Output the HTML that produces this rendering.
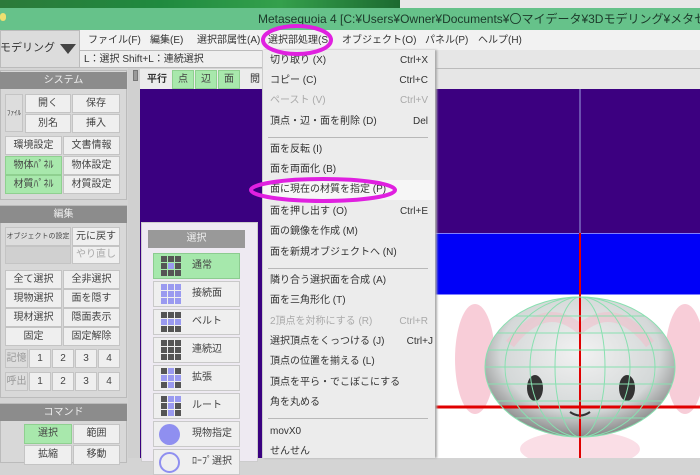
<!DOCTYPE html>
<html><head><meta charset="utf-8">
<style>
*{margin:0;padding:0;box-sizing:border-box}
body{width:700px;height:458px;overflow:hidden;position:relative;background:#d4d4d4;font-family:"Liberation Sans","Noto Sans CJK JP",sans-serif;font-size:10px;line-height:12px;color:#333}
.a{position:absolute}
.btn{position:absolute;background:#efefef;border:1px solid #c4c4c4;text-align:center;color:#444;font-size:10px}
.g{background:#a8e8ac;border-color:#8fd090}
.hd{position:absolute;background:#8c8c8c;color:#eee;text-align:center;font-size:10px}
.mi{position:absolute;left:270px;font-size:10px;line-height:12px;color:#333;white-space:nowrap}
.sc{position:absolute;right:272px;font-size:10px;line-height:12px;color:#333}
.dis{color:#aaa}
.sep{position:absolute;left:268px;width:160px;height:1px;background:#b8b8b8}
.si{position:absolute;left:153px;width:87px;height:26px;background:#efefef;border:1px solid #c9c9c9}
.si span{position:absolute;left:38px;top:6px;font-size:10px;line-height:12px;color:#444;white-space:nowrap}
.ic{position:absolute;left:7px;top:2px;width:20px;height:20px;display:grid;grid-template-columns:repeat(3,6px);gap:1px}
.D{background:#555}.B{background:#9a9af0}.L{background:#c4c4f4}
</style></head><body>
<div class="a" style="left:0;top:0;width:400px;height:8px;background:linear-gradient(90deg,#2c7a3a,#1f8a3f 40%,#34a04c 70%,#1c6a30)"></div>
<div class="a" style="left:400px;top:0;width:300px;height:8px;background:#e8e8e8"></div>
<div class="a" style="left:0;top:8px;width:700px;height:22px;background:#66c28a;overflow:hidden">
<div class="a" style="left:258px;top:4px;font-size:12px;line-height:14px;color:#1c3a2a;white-space:nowrap">Metasequoia 4 [C:¥Users¥Owner¥Documents¥〇マイデータ¥3Dモデリング¥メタセコ¥261マイ</div>
<div class="a" style="left:0;top:5px;width:6px;height:8px;border-radius:4px;background:#f0e070"></div>
</div>
<div class="a" style="left:80px;top:30px;width:620px;height:20px;background:#f2f2f2"></div>
<div class="a" style="left:0;top:30px;width:80px;height:38px;background:#dcdcdc;border:1px solid #bbb"></div>
<div class="a" style="left:0;top:42px;font-size:11px;line-height:13px;color:#333">モデリング</div>
<div class="a" style="left:60px;top:44px;width:0;height:0;border-left:8px solid transparent;border-right:8px solid transparent;border-top:10px solid #444"></div>
<div class="a" style="top:35px;left:88px;white-space:nowrap">ファイル(F)</div>
<div class="a" style="top:35px;left:150px">編集(E)</div>
<div class="a" style="top:35px;left:197px;white-space:nowrap">選択部属性(A)</div>
<div class="a" style="top:35px;left:268px;white-space:nowrap">選択部処理(S)</div>
<div class="a" style="top:35px;left:342px;white-space:nowrap">オブジェクト(O)</div>
<div class="a" style="top:35px;left:425px;white-space:nowrap">パネル(P)</div>
<div class="a" style="top:35px;left:478px;white-space:nowrap">ヘルプ(H)</div>
<div class="a" style="left:80px;top:50px;width:620px;height:18px;background:#efefef;border-top:1px solid #bbb;border-bottom:1px solid #bbb"></div>
<div class="a" style="left:84px;top:54px;white-space:nowrap">L：選択 Shift+L：連続選択</div>

<div class="a" style="left:0;top:70px;width:127px;height:130px;background:#d8d8d8;border:1px solid #bbb"></div>
<div class="hd" style="left:0;top:72px;width:127px;height:17px;line-height:17px">システム</div>
<div class="btn" style="left:5px;top:94px;width:18px;height:38px;background:#ddd;font-size:7px;line-height:38px">ﾌｧｲﾙ</div>
<div class="btn" style="left:25px;top:94px;width:46px;height:19px;line-height:17px">開く</div>
<div class="btn" style="left:72px;top:94px;width:48px;height:19px;line-height:17px">保存</div>
<div class="btn" style="left:25px;top:114px;width:46px;height:19px;line-height:17px">別名</div>
<div class="btn" style="left:72px;top:114px;width:48px;height:19px;line-height:17px">挿入</div>
<div class="btn" style="left:5px;top:136px;width:57px;height:19px;line-height:17px">環境設定</div>
<div class="btn" style="left:63px;top:136px;width:57px;height:19px;line-height:17px">文書情報</div>
<div class="btn g" style="left:5px;top:156px;width:57px;height:19px;line-height:17px">物体ﾊﾟﾈﾙ</div>
<div class="btn" style="left:63px;top:156px;width:57px;height:19px;line-height:17px">物体設定</div>
<div class="btn g" style="left:5px;top:175px;width:57px;height:19px;line-height:17px">材質ﾊﾟﾈﾙ</div>
<div class="btn" style="left:63px;top:175px;width:57px;height:19px;line-height:17px">材質設定</div>

<div class="a" style="left:0;top:205px;width:127px;height:193px;background:#d8d8d8;border:1px solid #bbb"></div>
<div class="hd" style="left:0;top:206px;width:127px;height:17px;line-height:17px">編集</div>
<div class="btn" style="left:5px;top:227px;width:66px;height:19px;line-height:17px;font-size:7px;background:#ddd;white-space:nowrap;overflow:hidden">オブジェクトの設定</div>
<div class="btn" style="left:72px;top:227px;width:48px;height:19px;line-height:17px">元に戻す</div>
<div class="btn" style="left:5px;top:246px;width:66px;height:18px;background:#d0d0d0"></div>
<div class="btn" style="left:72px;top:246px;width:48px;height:18px;line-height:16px;color:#aaa">やり直し</div>
<div class="btn" style="left:5px;top:270px;width:57px;height:19px;line-height:17px">全て選択</div>
<div class="btn" style="left:63px;top:270px;width:57px;height:19px;line-height:17px">全非選択</div>
<div class="btn" style="left:5px;top:289px;width:57px;height:19px;line-height:17px">現物選択</div>
<div class="btn" style="left:63px;top:289px;width:57px;height:19px;line-height:17px">面を隠す</div>
<div class="btn" style="left:5px;top:308px;width:57px;height:19px;line-height:17px">現材選択</div>
<div class="btn" style="left:63px;top:308px;width:57px;height:19px;line-height:17px">隠面表示</div>
<div class="btn" style="left:5px;top:327px;width:57px;height:19px;line-height:17px">固定</div>
<div class="btn" style="left:63px;top:327px;width:57px;height:19px;line-height:17px">固定解除</div>
<div class="btn" style="left:5px;top:349px;width:23px;height:19px;line-height:17px;background:#ddd;color:#999">記憶</div>
<div class="btn" style="left:29px;top:349px;width:22px;height:19px;line-height:17px">1</div>
<div class="btn" style="left:52px;top:349px;width:22px;height:19px;line-height:17px">2</div>
<div class="btn" style="left:75px;top:349px;width:22px;height:19px;line-height:17px">3</div>
<div class="btn" style="left:98px;top:349px;width:22px;height:19px;line-height:17px">4</div>
<div class="btn" style="left:5px;top:372px;width:23px;height:19px;line-height:17px;background:#ddd;color:#999">呼出</div>
<div class="btn" style="left:29px;top:372px;width:22px;height:19px;line-height:17px">1</div>
<div class="btn" style="left:52px;top:372px;width:22px;height:19px;line-height:17px">2</div>
<div class="btn" style="left:75px;top:372px;width:22px;height:19px;line-height:17px">3</div>
<div class="btn" style="left:98px;top:372px;width:22px;height:19px;line-height:17px">4</div>

<div class="a" style="left:0;top:403px;width:127px;height:60px;background:#d8d8d8;border:1px solid #bbb"></div>
<div class="hd" style="left:0;top:404px;width:127px;height:17px;line-height:17px">コマンド</div>
<div class="btn g" style="left:24px;top:424px;width:48px;height:20px;line-height:18px">選択</div>
<div class="btn" style="left:73px;top:424px;width:47px;height:20px;line-height:18px">範囲</div>
<div class="btn" style="left:24px;top:445px;width:48px;height:20px;line-height:18px">拡縮</div>
<div class="btn" style="left:73px;top:445px;width:47px;height:20px;line-height:18px">移動</div>

<div class="a" style="left:128px;top:68px;width:12px;height:390px;background:#d0d0d0"></div>
<div class="a" style="left:133px;top:70px;width:5px;height:11px;background:#999;border:1px solid #777"></div>
<div class="a" style="left:140px;top:69px;width:122px;height:20px;background:#ececec"></div>
<div class="a" style="left:147px;top:74px;font-weight:bold">平行</div>
<div class="btn g" style="left:172px;top:70px;width:22px;height:19px;line-height:17px">点</div>
<div class="btn g" style="left:195px;top:70px;width:22px;height:19px;line-height:17px">辺</div>
<div class="btn g" style="left:218px;top:70px;width:22px;height:19px;line-height:17px">面</div>
<div class="a" style="left:250px;top:74px">閲</div>
<div class="a" style="left:140px;top:89px;width:122px;height:369px;background:#3a0080"></div>
<div class="a" style="left:141px;top:222px;width:117px;height:240px;background:#eeeaf2;border:1px solid #ccc"></div>
<div class="hd" style="left:148px;top:230px;width:97px;height:18px;line-height:18px;background:#999">選択</div>
<div class="si" style="top:253px;background:#a6e8ac;border-color:#8ccc90"><div class="ic"><i class="D"></i><i class="D"></i><i class="D"></i><i class="D"></i><i class="B"></i><i class="D"></i><i class="D"></i><i class="D"></i><i class="D"></i></div><span>通常</span></div>
<div class="si" style="top:281px"><div class="ic"><i class="B"></i><i class="B"></i><i class="B"></i><i class="B"></i><i class="B"></i><i class="B"></i><i class="B"></i><i class="B"></i><i class="B"></i></div><span>接続面</span></div>
<div class="si" style="top:309px"><div class="ic"><i class="D"></i><i class="D"></i><i class="D"></i><i class="B"></i><i class="B"></i><i class="B"></i><i class="D"></i><i class="D"></i><i class="D"></i></div><span>ベルト</span></div>
<div class="si" style="top:337px"><div class="ic"><i class="D"></i><i class="D"></i><i class="D"></i><i class="D"></i><i class="D"></i><i class="D"></i><i class="D"></i><i class="D"></i><i class="D"></i></div><span>連続辺</span></div>
<div class="si" style="top:365px"><div class="ic"><i class="D"></i><i class="B"></i><i class="D"></i><i class="B"></i><i class="B"></i><i class="B"></i><i class="D"></i><i class="B"></i><i class="D"></i></div><span>拡張</span></div>
<div class="si" style="top:393px"><div class="ic"><i class="D"></i><i class="B"></i><i class="B"></i><i class="D"></i><i class="B"></i><i class="D"></i><i class="D"></i><i class="B"></i><i class="D"></i></div><span>ルート</span></div>
<div class="si" style="top:421px"><div class="a" style="left:5px;top:2px;width:21px;height:21px;border-radius:50%;background:#8f8ff0"></div><span>現物指定</span></div>
<div class="si" style="top:449px"><div class="a" style="left:5px;top:2px;width:21px;height:21px;border-radius:50%;border:2px solid #8f8ff0"></div><span>ﾛｰﾌﾟ選択</span></div>

<div class="a" style="left:430px;top:50px;width:270px;height:39px;background:#e6e6e6"></div>
<div class="a" style="left:435px;top:68px;width:265px;height:1px;background:#bbb"></div>
<div class="a" style="left:430px;top:89px;width:5px;height:369px;background:#d0d0d0"></div>
<div class="a" style="left:435px;top:89px;width:265px;height:144px;background:#3c0080"></div>
<div class="a" style="left:435px;top:233px;width:265px;height:62px;background:#0000f8;border-top:1px solid #8080ff;border-bottom:1px solid #8080ff"></div>
<div class="a" style="left:435px;top:295px;width:265px;height:163px;background:#fff"></div>
<svg class="a" style="left:435px;top:89px" width="265" height="369">
<line x1="145" y1="0" x2="145" y2="144" stroke="#6c50b0" stroke-width="2"/>
<g opacity="0.7"><ellipse cx="40" cy="270" rx="20" ry="55" fill="#f5b8c8"/><ellipse cx="250" cy="270" rx="20" ry="55" fill="#f5b8c8"/><ellipse cx="145" cy="360" rx="60" ry="18" fill="#f8d0dc"/></g>
<defs><radialGradient id="fg" cx="0.5" cy="0.4" r="0.6"><stop offset="0" stop-color="#f2f2f2"/><stop offset="0.7" stop-color="#d4d8d8"/><stop offset="1" stop-color="#888"/></radialGradient></defs>
<ellipse cx="145" cy="278" rx="95" ry="70" fill="url(#fg)"/>
<path d="M75 255 Q110 210 145 240 Q180 210 215 255" fill="none" stroke="#f0c0cc" stroke-width="10" opacity="0.6"/>
<ellipse cx="100" cy="299" rx="8" ry="13" fill="#333"/><ellipse cx="192" cy="299" rx="8" ry="13" fill="#333"/>
<path d="M135 323 Q145 330 155 323" stroke="#333" stroke-width="2" fill="none"/>
<line x1="145" y1="144" x2="145" y2="369" stroke="#e00000" stroke-width="2"/>
<line x1="0" y1="318" x2="265" y2="318" stroke="#e00000" stroke-width="3"/>
<g fill="none" stroke="#88e0b0" stroke-width="1">
<ellipse cx="145" cy="278" rx="95" ry="70"/>
<ellipse cx="145" cy="278" rx="75" ry="70"/>
<ellipse cx="145" cy="278" rx="50" ry="70"/>
<ellipse cx="145" cy="278" rx="25" ry="70"/>
<line x1="80" y1="227" x2="210" y2="227"/><line x1="62" y1="244" x2="228" y2="244"/><line x1="53" y1="261" x2="237" y2="261"/><line x1="50" y1="278" x2="240" y2="278"/><line x1="53" y1="295" x2="237" y2="295"/><line x1="62" y1="312" x2="228" y2="312"/><line x1="80" y1="329" x2="210" y2="329"/>
</g>
</svg>

<div class="a" style="left:262px;top:50px;width:173px;height:408px;background:#ececec;border-left:1px solid #ccc;box-shadow:2px 0 2px #aaa"></div>
<div class="a" style="left:263px;top:180px;width:171px;height:20px;background:#f6f6f6"></div>
<div class="mi" style="top:55px">切り取り (X)</div><div class="sc" style="top:55px">Ctrl+X</div>
<div class="mi" style="top:75px">コピー (C)</div><div class="sc" style="top:75px">Ctrl+C</div>
<div class="mi dis" style="top:95px">ペースト (V)</div><div class="sc dis" style="top:95px">Ctrl+V</div>
<div class="mi" style="top:116px">頂点・辺・面を削除 (D)</div><div class="sc" style="top:116px">Del</div>
<div class="sep" style="top:137px"></div>
<div class="mi" style="top:144px">面を反転 (I)</div>
<div class="mi" style="top:164px">面を両面化 (B)</div>
<div class="mi" style="top:184px">面に現在の材質を指定 (P)</div>
<div class="mi" style="top:206px">面を押し出す (O)</div><div class="sc" style="top:206px">Ctrl+E</div>
<div class="mi" style="top:226px">面の鏡像を作成 (M)</div>
<div class="mi" style="top:247px">面を新規オブジェクトへ (N)</div>
<div class="sep" style="top:268px"></div>
<div class="mi" style="top:275px">隣り合う選択面を合成 (A)</div>
<div class="mi" style="top:295px">面を三角形化 (T)</div>
<div class="mi dis" style="top:316px">2頂点を対称にする (R)</div><div class="sc dis" style="top:316px">Ctrl+R</div>
<div class="mi" style="top:336px">選択頂点をくっつける (J)</div><div class="sc" style="top:336px;right:267px">Ctrl+J</div>
<div class="mi" style="top:356px">頂点の位置を揃える (L)</div>
<div class="mi" style="top:377px">頂点を平ら・でこぼこにする</div>
<div class="mi" style="top:397px">角を丸める</div>
<div class="sep" style="top:418px"></div>
<div class="mi" style="top:426px">movX0</div>
<div class="mi" style="top:446px">せんせん</div>

<svg class="a" style="left:0;top:0" width="700" height="458">
<ellipse cx="297" cy="40" rx="34" ry="14" fill="none" stroke="#e020e0" stroke-width="4"/>
<ellipse cx="323" cy="190" rx="72" ry="11" fill="none" stroke="#e020e0" stroke-width="4"/>
</svg>
</body></html>
